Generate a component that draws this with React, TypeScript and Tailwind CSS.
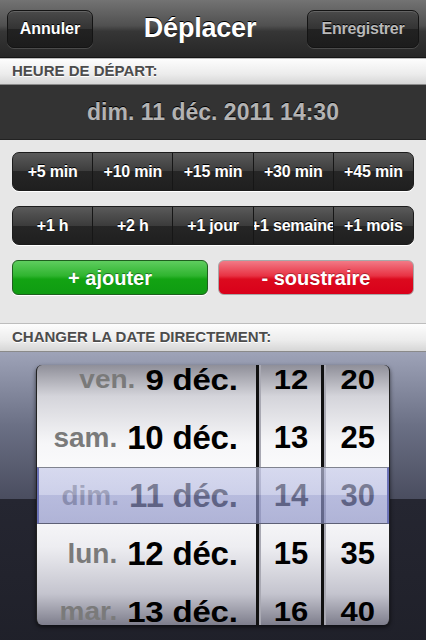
import React from 'react'

const ROWS = [
  { wd: 'ven.', day: '9 déc.', h: '12', m: '20', edge: true },
  { wd: 'sam.', day: '10 déc.', h: '13', m: '25', edge: false },
  { wd: 'dim.', day: '11 déc.', h: '14', m: '30', edge: false },
  { wd: 'lun.', day: '12 déc.', h: '15', m: '35', edge: false },
  { wd: 'mar.', day: '13 déc.', h: '16', m: '40', edge: true },
]

const MINUTES = ['+5 min', '+10 min', '+15 min', '+30 min', '+45 min']
const LONGS = ['+1 h', '+2 h', '+1 jour', '+1 semaine', '+1 mois']

const wheel =
  'bg-[linear-gradient(to_bottom,#8f8f99_0%,#d4d4da_12%,#f6f6f8_30%,#ffffff_50%,#ededf1_70%,#c4c4ce_88%,#7e7e8c_100%)]'

function Segmented({ items }: { items: string[] }) {
  return (
    <div className="flex h-[39px] rounded-[7px] border border-[#1c1c1c] overflow-hidden bg-[linear-gradient(to_bottom,#5a5a5a_0%,#3c3c3c_50%,#262626_50%,#1f1f1f_100%)] shadow-[0_1px_0_#fff]">
      {items.map((t, i) => (
        <div
          key={t}
          className={`flex-1 flex items-center justify-center overflow-hidden whitespace-nowrap text-white font-bold text-[16px] tracking-[-0.2px] [text-shadow:0_-1px_0_#000] ${i > 0 ? 'border-l border-[#161616]' : ''}`}
        >
          {t}
        </div>
      ))}
    </div>
  )
}

function SectionHeader({ label, h }: { label: string; h: string }) {
  return (
    <div className={`${h} flex items-center px-[12px] bg-[linear-gradient(to_bottom,#fdfdfd_0%,#ececec_60%,#d6d6d6_100%)] border-t border-[#bdbdbd] border-b border-b-[#8a8a8a]`}>
      <span className="text-[15px] font-bold text-[#4c4c4c] [text-shadow:0_1px_0_#fff]">{label}</span>
    </div>
  )
}

export default function App() {
  return (
    <div className="w-[426px] h-[640px] overflow-hidden bg-[#1f2029] font-['Liberation_Sans',Arial,sans-serif]">
      {/* Barre de navigation */}
      <div className="h-[58px] flex items-center justify-between px-[7px] bg-[linear-gradient(to_bottom,#737373_0%,#505050_45%,#363636_55%,#262626_100%)] border-b border-[#141414]">
        <button className="w-[86px] h-[38px] rounded-[7px] border border-[#141414] bg-[linear-gradient(to_bottom,#4a4a4a_0%,#333_50%,#222_50%,#1c1c1c_100%)] text-white font-bold text-[16px] shadow-[inset_0_1px_0_rgba(255,255,255,0.15),0_1px_0_rgba(255,255,255,0.15)] [text-shadow:0_-1px_0_#000]">
          Annuler
        </button>
        <h1 className="text-white font-bold text-[27px] tracking-[-0.2px] [text-shadow:0_-1px_0_#000]">Déplacer</h1>
        <button className="w-[112px] h-[38px] rounded-[7px] border border-[#141414] bg-[linear-gradient(to_bottom,#4a4a4a_0%,#333_50%,#222_50%,#1c1c1c_100%)] text-[#b9b9b9] font-bold text-[16px] tracking-[-0.2px] shadow-[inset_0_1px_0_rgba(255,255,255,0.15),0_1px_0_rgba(255,255,255,0.15)] [text-shadow:0_-1px_0_#000]">
          Enregistrer
        </button>
      </div>

      <SectionHeader label="HEURE DE DÉPART:" h="h-[27px]" />

      {/* Date actuelle */}
      <div className="h-[55px] flex items-center justify-center bg-[#333333] border-b border-[#222]">
        <span className="text-[#b3b3b3] font-bold text-[23px] [text-shadow:0_-1px_0_#000]">dim. 11 déc. 2011 14:30</span>
      </div>

      {/* Boutons */}
      <div className="h-[183px] bg-[#e7e7e7] px-[12px] pt-[12px] flex flex-col gap-[15px]">
        <Segmented items={MINUTES} />
        <Segmented items={LONGS} />
        <div className="flex gap-[10px]">
          <button className="flex-1 h-[35px] rounded-[6px] border border-[#1f5e1f] bg-[linear-gradient(to_bottom,#5fcd5f_0%,#2fb42f_45%,#13a313_55%,#0f9c12_100%)] text-white font-bold text-[20px] [text-shadow:0_-1px_0_rgba(0,0,0,0.4)] shadow-[0_1px_0_#fff]">
            + ajouter
          </button>
          <button className="flex-1 h-[35px] rounded-[6px] border border-[#a8a8a8] bg-[linear-gradient(to_bottom,#f27a86_0%,#e83243_45%,#dc0a1e_55%,#d9001a_100%)] text-white font-bold text-[20px] [text-shadow:0_-1px_0_rgba(0,0,0,0.3)]">
            - soustraire
          </button>
        </div>
      </div>

      <SectionHeader label="CHANGER LA DATE DIRECTEMENT:" h="h-[29px]" />

      {/* Sélecteur */}
      <div className="h-[300px] pt-[13px] bg-[linear-gradient(to_bottom,#9ea3b8_0%,#6a6f84_25%,#4a4d5f_49%,#252631_49%,#1f2029_100%)]">
        <div className="relative mx-[36px] h-[260px] rounded-[6px] overflow-hidden border-x border-[#222] bg-[#1a1a1a] shadow-[0_2px_4px_rgba(0,0,0,0.6)]">
          <div className="flex h-full">
            <div className={`w-[220px] ${wheel}`}>
              <div className="-mt-[14px]">
                {ROWS.map(r => (
                  <div key={r.wd} className={`h-[58px] flex items-center justify-end pr-[18px] font-bold ${r.edge ? 'scale-y-90' : ''}`}>
                    <span className="text-[#7a7a7a] text-[28px] mr-[10px]">{r.wd}</span>
                    <span className="text-black text-[33px] tracking-[-0.2px]">{r.day}</span>
                  </div>
                ))}
              </div>
            </div>
            <div className="w-[5px] bg-[#a9a9b3] border-l-[3px] border-[#111]" />
            <div className={`w-[61px] ${wheel}`}>
              <div className="-mt-[14px]">
                {ROWS.map(r => (
                  <div key={r.h} className={`h-[58px] flex items-center justify-center font-bold text-[31px] text-black ${r.edge ? 'scale-y-90' : ''}`}>
                    {r.h}
                  </div>
                ))}
              </div>
            </div>
            <div className="w-[5px] bg-[#a9a9b3] border-l-[3px] border-[#111]" />
            <div className={`w-[63px] ${wheel}`}>
              <div className="-mt-[14px]">
                {ROWS.map(r => (
                  <div key={r.m} className={`h-[58px] flex items-center justify-center font-bold text-[31px] text-black ${r.edge ? 'scale-y-90' : ''}`}>
                    {r.m}
                  </div>
                ))}
              </div>
            </div>
          </div>
          {/* Barre de sélection */}
          <div className="absolute left-0 right-0 top-[102px] h-[57px] border-t border-[#80838f] border-b border-b-[#5d6076] border-x-2 border-x-[#6d74b8] bg-[linear-gradient(to_bottom,rgba(196,200,232,0.66)_0%,rgba(178,183,222,0.66)_50%,rgba(146,152,204,0.66)_50%,rgba(140,146,198,0.66)_100%)]" />
        </div>
      </div>
    </div>
  )
}
